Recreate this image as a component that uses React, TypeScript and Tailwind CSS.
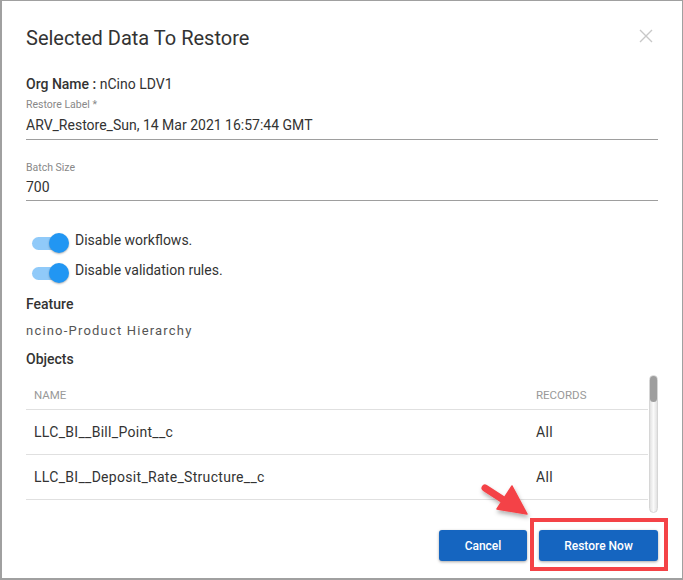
import React from 'react';

const rows = [
  { name: 'LLC_BI__Bill_Point__c', records: 'All' },
  { name: 'LLC_BI__Deposit_Rate_Structure__c', records: 'All' },
];

const Toggle = ({ label }: { label: string }) => (
  <div className="flex items-center h-[30px]">
    <div className="relative w-[49px] h-[20px] flex items-center">
      <div className="ml-[9px] w-[33px] h-[13px] rounded-full bg-[#90caf9]" />
      <div className="absolute left-[26px] top-0 w-[20px] h-[20px] rounded-full bg-[#2196f3] shadow-[0_1px_2px_rgba(0,0,0,0.3)]" />
    </div>
    <span className="ml-[3px] text-[14px] text-[#333] -mt-[5px]">{label}</span>
  </div>
);

export default function App() {
  return (
    <div
      className="relative w-[683px] h-[580px] bg-white border-t border-r border-l-2 border-b-2 border-[#a0a0a0] overflow-hidden"
      style={{ fontFamily: 'Roboto, "Liberation Sans", sans-serif' }}
    >
      <div className="pl-[24px] pr-[24px] pt-[24px]">
        {/* Header */}
        <div className="flex items-start justify-between">
          <h2 className="text-[20px] leading-[26px] text-[#333]">Selected Data To Restore</h2>
          <svg className="mt-[4px] mr-[5px]" width="14" height="14" viewBox="0 0 14 14">
            <path d="M1 1L13 13M13 1L1 13" stroke="#c8c8c8" strokeWidth="1.4" />
          </svg>
        </div>

        <div className="mt-[24px] text-[14px] leading-[18px] text-[#333]">
          <span className="font-medium">Org Name :</span> nCino LDV1
        </div>

        {/* Restore label field */}
        <div className="mt-[5px] border-b border-[#9e9e9e] pb-[4px]">
          <div className="text-[10.5px] leading-[14px] text-[#888]">Restore Label *</div>
          <div className="mt-[3px] text-[14px] leading-[20px] text-[#333]">ARV_Restore_Sun, 14 Mar 2021 16:57:44 GMT</div>
        </div>

        {/* Batch size field */}
        <div className="mt-[21px] border-b border-[#9e9e9e] pb-[3px]">
          <div className="text-[10.5px] leading-[14px] text-[#888]">Batch Size</div>
          <div className="mt-[2px] text-[14px] leading-[20px] text-[#333]">700</div>
        </div>

        <div className="mt-[27px] -ml-[3px]">
          <Toggle label="Disable workflows." />
          <Toggle label="Disable validation rules." />
        </div>

        <div className="mt-[7px] text-[14px] leading-[18px] font-medium text-[#333]">Feature</div>
        <div className="mt-[9px] text-[13px] leading-[18px] tracking-[1.2px] text-[#555]">ncino-Product Hierarchy</div>
        <div className="mt-[10px] text-[14px] leading-[18px] font-medium text-[#333]">Objects</div>

        {/* Objects table */}
        <div className="mt-[8px] flex">
          <div className="flex-1">
            <div className="flex items-center h-[34px] border-b border-[#e0e0e0] pt-[6px] text-[11.5px] text-[#999]">
              <div className="flex-1 pl-[8px]">NAME</div>
              <div className="w-[112px]">RECORDS</div>
            </div>
            {rows.map((r, i) => (
              <div key={i} className="flex items-center h-[45px] border-b border-[#e0e0e0] text-[14px] tracking-[0.3px] text-[#333]">
                <div className="flex-1 pl-[8px]">{r.name}</div>
                <div className="w-[112px]">{r.records}</div>
              </div>
            ))}
          </div>
          <div className="ml-[1px] w-[9px] mt-[-1px] h-[138px] rounded-full bg-gradient-to-r from-[#e2e2e2] via-[#fafafa] to-[#e2e2e2] border border-[#d6d6d6] flex flex-col">
            <div className="h-[26px] rounded-full bg-[#9e9e9e]" />
          </div>
        </div>

        {/* Footer */}
        <div className="mt-[17px] flex justify-end gap-[12px]">
          <button className="w-[88px] h-[31px] rounded-[3px] bg-[#1565c0] text-white text-[12px] font-medium shadow-[0_1px_3px_rgba(0,0,0,0.35)]">
            Cancel
          </button>
          <button className="w-[119px] h-[31px] rounded-[3px] bg-[#1565c0] text-white text-[12px] font-medium shadow-[0_1px_3px_rgba(0,0,0,0.35)]">
            Restore Now
          </button>
        </div>
      </div>

      {/* Annotation: highlight box */}
      <div className="absolute left-[528px] top-[517px] w-[138px] h-[53px] border-[4px] border-[#f44347]" />

      {/* Annotation: arrow */}
      <svg className="absolute left-[470px] top-[476px]" width="64" height="46" viewBox="0 0 64 46">
        <defs>
          <filter id="sh" x="-20%" y="-20%" width="150%" height="150%">
            <feDropShadow dx="1" dy="3" stdDeviation="2" floodColor="#000" floodOpacity="0.3" />
          </filter>
        </defs>
        <g filter="url(#sh)">
          <path d="M13 11 L30 22" stroke="#f44347" strokeWidth="7" strokeLinecap="round" />
          <path d="M40 9 L55 37 L25 32 Z" fill="#f44347" strokeLinejoin="round" stroke="#f44347" strokeWidth="1.5" />
        </g>
      </svg>
    </div>
  );
}
